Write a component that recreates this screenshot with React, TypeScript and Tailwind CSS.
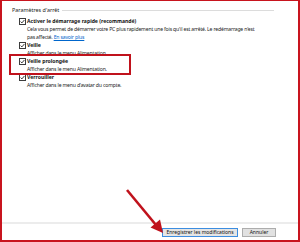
import React from "react";

const font = { fontFamily: '"Segoe UI", "Noto Sans", "Open Sans", sans-serif' };

function Box() {
  return (
    <svg width="7" height="7" viewBox="0 0 7 7" className="shrink-0">
      <rect x="0.5" y="0.5" width="6" height="6" fill="#fff" stroke="#3c3c3c" strokeWidth="1" />
      <path d="M1.6 3.6 L2.9 4.9 L5.4 2" fill="none" stroke="#222" strokeWidth="0.9" />
    </svg>
  );
}

function Option({ label, children }: { label: string; children?: React.ReactNode }) {
  return (
    <div className="flex flex-col">
      <div className="flex h-[8px] items-center gap-[1px]">
        <Box />
        <span className="font-bold text-[#111]">{label}</span>
      </div>
      <div className="pl-[8px] tracking-[-0.17px] text-[#222]">{children}</div>
    </div>
  );
}

export default function App() {
  return (
    <div
      className="relative flex h-[242px] w-[300px] flex-col border-2 border-t border-[#c8141e] bg-white text-[5.1px] leading-[8px]"
      style={font}
    >
      {/* Paramètres d'arrêt */}
      <div className="pl-[10px] pt-[5px]">
        <div className="flex items-center gap-[3px] pr-[24px]">
          <span className="text-[5.4px] text-[#222]">Paramètres d'arrêt</span>
          <div className="h-px flex-1 bg-[#dcdcdc]" />
        </div>

        <div className="mt-[3px] flex flex-col pl-[7px]">
          <Option label="Activer le démarrage rapide (recommandé)">
            <p>Cela vous permet de démarrer votre PC plus rapidement une fois qu'il est arrêté. Le redémarrage n'est</p>
            <p>
              pas affecté. <span className="text-[#0066cc] underline">En savoir plus</span>
            </p>
          </Option>
          <Option label="Veille">
            <p>Afficher dans le menu Alimentation.</p>
          </Option>
          <Option label="Veille prolongée">
            <p>Afficher dans le menu Alimentation.</p>
          </Option>
          <Option label="Verrouiller">
            <p>Afficher dans le menu d'avatar du compte.</p>
          </Option>
        </div>
      </div>

      <div className="flex-1" />

      {/* Boutons */}
      <div className="flex h-[18px] items-center justify-end gap-[4px] border-t-2 border-[#ececec] pr-[22px]">
        <button className="h-[9px] w-[76px] border border-[#3c8de0] bg-[#e5e5e5] text-[5px] leading-none text-[#111]">
          Enregistrer les modifications
        </button>
        <button className="h-[9px] w-[34px] border border-[#adadad] bg-[#e1e1e1] text-[5px] leading-none text-[#111]">
          Annuler
        </button>
      </div>

      {/* annotations */}
      <div className="absolute left-[7px] top-[53px] h-[21px] w-[122px] border-2 border-[#c0121c]" />
      <svg className="absolute left-[-2px] top-[-1px]" width="300" height="242" viewBox="0 0 300 242">
        <line x1="127" y1="190" x2="156" y2="225" stroke="#c0121c" strokeWidth="2.6" />
        <polygon points="163,233 160,219.5 150.5,227.5" fill="#c0121c" />
      </svg>
    </div>
  );
}
